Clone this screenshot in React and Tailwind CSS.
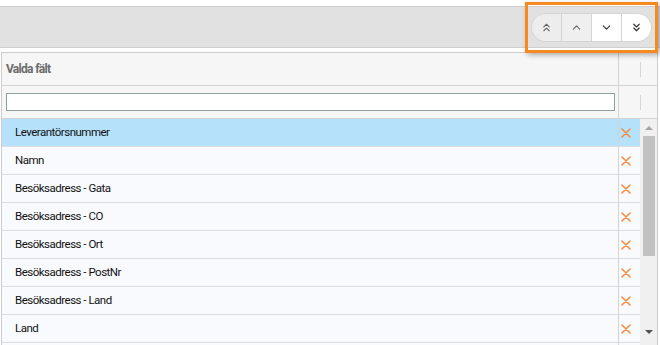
import { ChevronUp, ChevronDown, ChevronsUp, ChevronsDown } from "lucide-react";

const rows = [
  "Leverantörsnummer",
  "Namn",
  "Besöksadress - Gata",
  "Besöksadress - CO",
  "Besöksadress - Ort",
  "Besöksadress - PostNr",
  "Besöksadress - Land",
  "Land",
  "",
];

function Cross() {
  return (
    <svg width="10" height="10" viewBox="0 0 10 10">
      <path d="M1 1L9 9M9 1L1 9" stroke="#f5893b" strokeWidth="1.5" strokeLinecap="round" />
    </svg>
  );
}

export default function App() {
  return (
    <div className="h-[345px] w-[660px] overflow-hidden bg-white font-['Roboto',sans-serif] text-[11.5px]">
      {/* toolbar */}
      <div className="relative mt-[6px] h-[42px] border-y border-[#cfcfcf] bg-[#e1e1e1]">
        <div className="absolute left-[525px] top-[-5px] flex h-[51px] w-[133px] items-center justify-center border-[3px] border-[#f7891f] shadow-[2px_2px_5px_rgba(0,0,0,0.3)]">
          <div className="flex h-[29px] overflow-hidden rounded-full border border-[#d4d4d4]">
            <button className="flex w-[30px] items-center justify-center border-r border-[#d4d4d4] bg-[#ededed] text-[#666]">
              <ChevronsUp size={13} strokeWidth={2} />
            </button>
            <button className="flex w-[30px] items-center justify-center border-r border-[#d4d4d4] bg-[#efefef] text-[#666]">
              <ChevronUp size={13} strokeWidth={2} />
            </button>
            <button className="flex w-[30px] items-center justify-center border-r border-[#d4d4d4] bg-white text-[#333]">
              <ChevronDown size={13} strokeWidth={2.2} />
            </button>
            <button className="flex w-[29px] items-center justify-center bg-white text-[#333]">
              <ChevronsDown size={13} strokeWidth={2.2} />
            </button>
          </div>
        </div>
      </div>

      {/* grid */}
      <div className="ml-px mt-[4px] w-[657px] border-x border-t border-[#cccccc]">
        <div className="flex h-[33px] border-b border-[#d3d3d3] bg-[#f5f6f5]">
          <div className="flex flex-1 items-center border-r border-[#d3d3d3] pl-[4px] text-[12px] font-bold tracking-[-0.7px] text-[#6b6b6b]">
            Valda fält
          </div>
          <div className="flex w-[38px] items-center">
            <div className="ml-[21px] h-[15px] w-px bg-[#d6d6d6]" />
          </div>
        </div>
        <div className="flex h-[33px] border-b border-[#d3d3d3] bg-[#f5f6f5]">
          <div className="flex flex-1 items-center border-r border-[#d3d3d3] pl-[4px] pr-[3px]">
            <input className="h-[18px] w-full border border-[#8fa09b] bg-white outline-none" />
          </div>
          <div className="flex w-[38px] items-center">
            <div className="ml-[21px] h-[15px] w-px bg-[#d6d6d6]" />
          </div>
        </div>
        <div className="flex">
          <div className="flex-1">
            {rows.map((r, i) => (
              <div
                key={i}
                className={`flex h-[28px] border-b border-[#dddddd] ${i === 0 ? "bg-[#b5e1fb]" : "bg-[#f9fafd]"}`}
              >
                <div className="flex flex-1 items-center border-r border-[#d3d3d3] pl-[13px] tracking-[-0.5px] text-[#111]">
                  {r}
                </div>
                <div className="flex w-[21px] items-center pl-[2px]">
                  {r && <Cross />}
                </div>
              </div>
            ))}
          </div>
          <div className="flex w-[17px] flex-col items-center bg-[#f0f0f0]">
            <div className="mt-[7px] h-0 w-0 border-x-[4px] border-b-[4px] border-x-transparent border-b-[#a3a3a3]" />
            <div className="mt-[6px] h-[120px] w-[12px] bg-[#c1c1c1]" />
            <div className="mt-[74px] h-0 w-0 border-x-[4px] border-t-[4px] border-x-transparent border-t-[#505050]" />
          </div>
        </div>
      </div>
    </div>
  );
}
